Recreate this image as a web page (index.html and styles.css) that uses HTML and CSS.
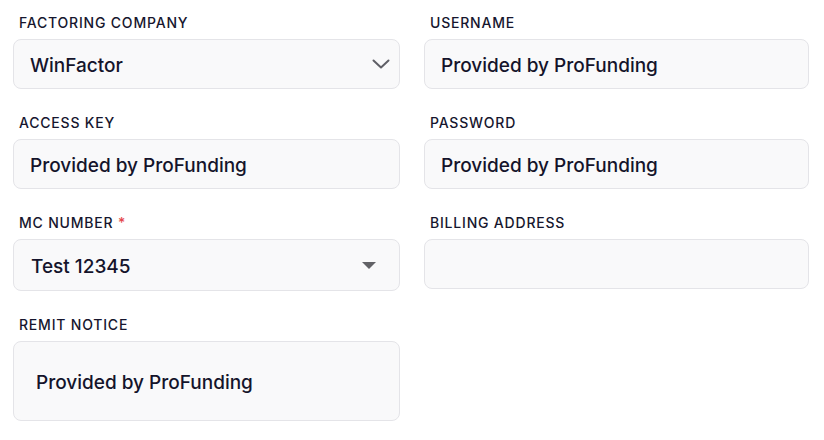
FILE: index.html
```html
<!DOCTYPE html>
<html lang="en">
<head>
    <meta charset="UTF-8">
    <meta name="viewport" content="width=device-width, initial-scale=1.0">
    <title>Factoring Settings</title>
    <link rel="stylesheet" href="styles.css">
</head>
<body>
    <form class="form-grid">
        <div class="field">
            <label class="field-label">Factoring Company</label>
            <div class="box select-box">
                <span class="value">WinFactor</span>
                <svg class="chevron" width="18" height="10" viewBox="0 0 18 10">
                    <path d="M1.5 1.5 L9 8.5 L16.5 1.5" fill="none" stroke="#5f5f66" stroke-width="2" stroke-linecap="round" stroke-linejoin="round"/>
                </svg>
            </div>
        </div>

        <div class="field">
            <label class="field-label">Username</label>
            <div class="box"><span class="value">Provided by ProFunding</span></div>
        </div>

        <div class="field">
            <label class="field-label">Access Key</label>
            <div class="box"><span class="value">Provided by ProFunding</span></div>
        </div>

        <div class="field">
            <label class="field-label">Password</label>
            <div class="box"><span class="value">Provided by ProFunding</span></div>
        </div>

        <div class="field">
            <label class="field-label">MC Number <span class="required">*</span></label>
            <div class="box select-box tall">
                <span class="value">Test 12345</span>
                <span class="caret"></span>
            </div>
        </div>

        <div class="field">
            <label class="field-label">Billing Address</label>
            <div class="box"></div>
        </div>

        <div class="field">
            <label class="field-label">Remit Notice</label>
            <div class="box textarea-box"><span class="value">Provided by ProFunding</span></div>
        </div>
    </form>
</body>
</html>
```

FILE: styles.css
```css
body {
    font-family: Inter, "Noto Sans", sans-serif;
    background-color: #ffffff;
    color: #16162e;
    margin: 0;
    padding: 0;
}
.form-grid {
    display: grid;
    grid-template-columns: 387px 385px;
    column-gap: 24px;
    row-gap: 26px;
    padding: 15px 0 0 13px;
}
.field {
    display: flex;
    flex-direction: column;
}
.field-label {
    display: block;
    height: 16px;
    line-height: 16px;
    font-size: 14px;
    font-weight: 500;
    letter-spacing: 0.8px;
    text-transform: uppercase;
    padding-left: 6px;
    margin-bottom: 8px;
}
.required {
    color: #e5484d;
}
.box {
    box-sizing: border-box;
    height: 50px;
    background-color: #f9f9fa;
    border: 1px solid #e4e4e8;
    border-radius: 8px;
    padding: 0 16px;
    display: flex;
    align-items: center;
}
.value {
    font-size: 19px;
    font-weight: 500;
    color: #14142b;
    padding-top: 2px;
}
.select-box {
    justify-content: space-between;
    padding-right: 9px;
}
.tall {
    height: 52px;
    padding-left: 17px;
    padding-right: 23px;
}
.caret {
    width: 0;
    height: 0;
    border-left: 7px solid transparent;
    border-right: 7px solid transparent;
    border-top: 7px solid #626266;
}
.textarea-box {
    height: 80px;
    padding-left: 22px;
}
```
